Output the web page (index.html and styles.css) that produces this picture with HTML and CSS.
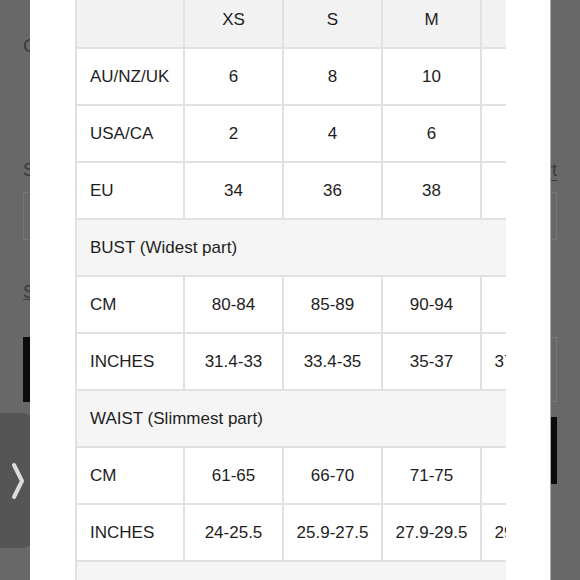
FILE: index.html
```html
<!DOCTYPE html>
<html lang="en">
<head>
    <meta charset="UTF-8">
    <meta name="viewport" content="width=device-width, initial-scale=1.0">
    <title>Size Guide</title>
    <link rel="stylesheet" href="styles.css">
</head>
<body>
    <div class="page">
        <h2 class="page-title">Choose your size</h2>
        <div class="size-line">
            <span>Size</span>
            <a class="chart-link">Size chart</a>
        </div>
        <div class="select-box"></div>
        <a class="small-link">Sizing help</a>
        <div class="btn-row">
            <div class="btn-dark"></div>
            <div class="btn-outline"></div>
        </div>
        <div class="btn-dark btn-full"></div>
    </div>

    <div class="side-tab">
        <svg width="14" height="40" viewBox="0 0 14 40">
            <path d="M3 4 L11 20 L3 36" fill="none" stroke="#dcdcdc" stroke-width="4" stroke-linecap="round" stroke-linejoin="round"/>
        </svg>
    </div>

    <div class="modal">
        <div class="table-wrap">
            <table class="size-table">
                <colgroup>
                    <col class="col-label">
                    <col class="col-size"><col class="col-size"><col class="col-size"><col class="col-size"><col class="col-size">
                </colgroup>
                <tr class="head-row">
                    <td></td><td>XS</td><td>S</td><td>M</td><td>L</td><td>XL</td>
                </tr>
                <tr>
                    <td class="label">AU/NZ/UK</td><td>6</td><td>8</td><td>10</td><td>12</td><td>14</td>
                </tr>
                <tr>
                    <td class="label">USA/CA</td><td>2</td><td>4</td><td>6</td><td>8</td><td>10</td>
                </tr>
                <tr>
                    <td class="label">EU</td><td>34</td><td>36</td><td>38</td><td>40</td><td>42</td>
                </tr>
                <tr class="section-row">
                    <td colspan="6">BUST (Widest part)</td>
                </tr>
                <tr>
                    <td class="label">CM</td><td>80-84</td><td>85-89</td><td>90-94</td><td>95-99</td><td>100-104</td>
                </tr>
                <tr>
                    <td class="label">INCHES</td><td>31.4-33</td><td>33.4-35</td><td>35-37</td><td>37.4-39.4</td><td>39.4-41</td>
                </tr>
                <tr class="section-row">
                    <td colspan="6">WAIST (Slimmest part)</td>
                </tr>
                <tr>
                    <td class="label">CM</td><td>61-65</td><td>66-70</td><td>71-75</td><td>76-80</td><td>81-85</td>
                </tr>
                <tr>
                    <td class="label">INCHES</td><td>24-25.5</td><td>25.9-27.5</td><td>27.9-29.5</td><td>29.9-31.5</td><td>31.9-33.5</td>
                </tr>
                <tr class="section-row">
                    <td colspan="6">HIPS (Fullest part)</td>
                </tr>
            </table>
        </div>
    </div>
</body>
</html>
```

FILE: styles.css
```css
body {
    margin: 0;
    width: 580px;
    height: 580px;
    overflow: hidden;
    position: relative;
    background-color: #686868;
    font-family: "Liberation Sans", Arial, sans-serif;
}
.page {
    padding: 0 23px;
    color: #3a3a3a;
}
.page-title {
    margin: 0;
    padding-top: 35px;
    font-size: 19px;
    font-weight: normal;
    height: 125px;
}
.size-line {
    display: flex;
    justify-content: space-between;
    font-size: 18px;
    height: 30px;
}
.chart-link {
    text-decoration: underline;
    text-underline-offset: 4px;
}
.select-box {
    margin-top: 2px;
    height: 46px;
    border: 1px solid #777;
}
.small-link {
    display: block;
    margin-top: 42px;
    font-size: 18px;
    text-decoration: underline;
    height: 55px;
}
.btn-row {
    display: flex;
    gap: 10px;
}
.btn-dark {
    flex: 1;
    height: 65px;
    background-color: #0c0c0c;
}
.btn-outline {
    flex: 1;
    height: 63px;
    border: 1px solid #777;
}
.btn-full {
    margin-top: 15px;
    height: 67px;
}
.side-tab {
    position: absolute;
    left: 0;
    top: 413px;
    width: 35px;
    height: 135px;
    background-color: #555;
    border-radius: 0 14px 14px 0;
    display: flex;
    align-items: center;
    padding-left: 11px;
    box-sizing: border-box;
}
.modal {
    position: absolute;
    left: 30px;
    top: 0;
    width: 521px;
    height: 580px;
    background-color: #fff;
    border-right: 1px solid #aaa;
    padding: 0 45px;
    box-sizing: border-box;
    overflow: hidden;
}
.table-wrap {
    width: 431px;
    overflow: hidden;
    margin-top: -10px;
}
.size-table {
    border-collapse: collapse;
    font-size: 17px;
    color: #1e1e1e;
    table-layout: fixed;
    width: 604px;
}
.col-label {
    width: 108px;
}
.col-size {
    width: 99px;
}
.size-table td {
    border: 2px solid #e1e1e1;
    height: 55px;
    padding: 0;
    text-align: center;
    white-space: nowrap;
}
.size-table td.label {
    text-align: left;
    padding-left: 13px;
}
.head-row td {
    background-color: #f2f2f2;
}
.section-row td {
    background-color: #f5f5f5;
    text-align: left;
    padding-left: 13px;
}
```
